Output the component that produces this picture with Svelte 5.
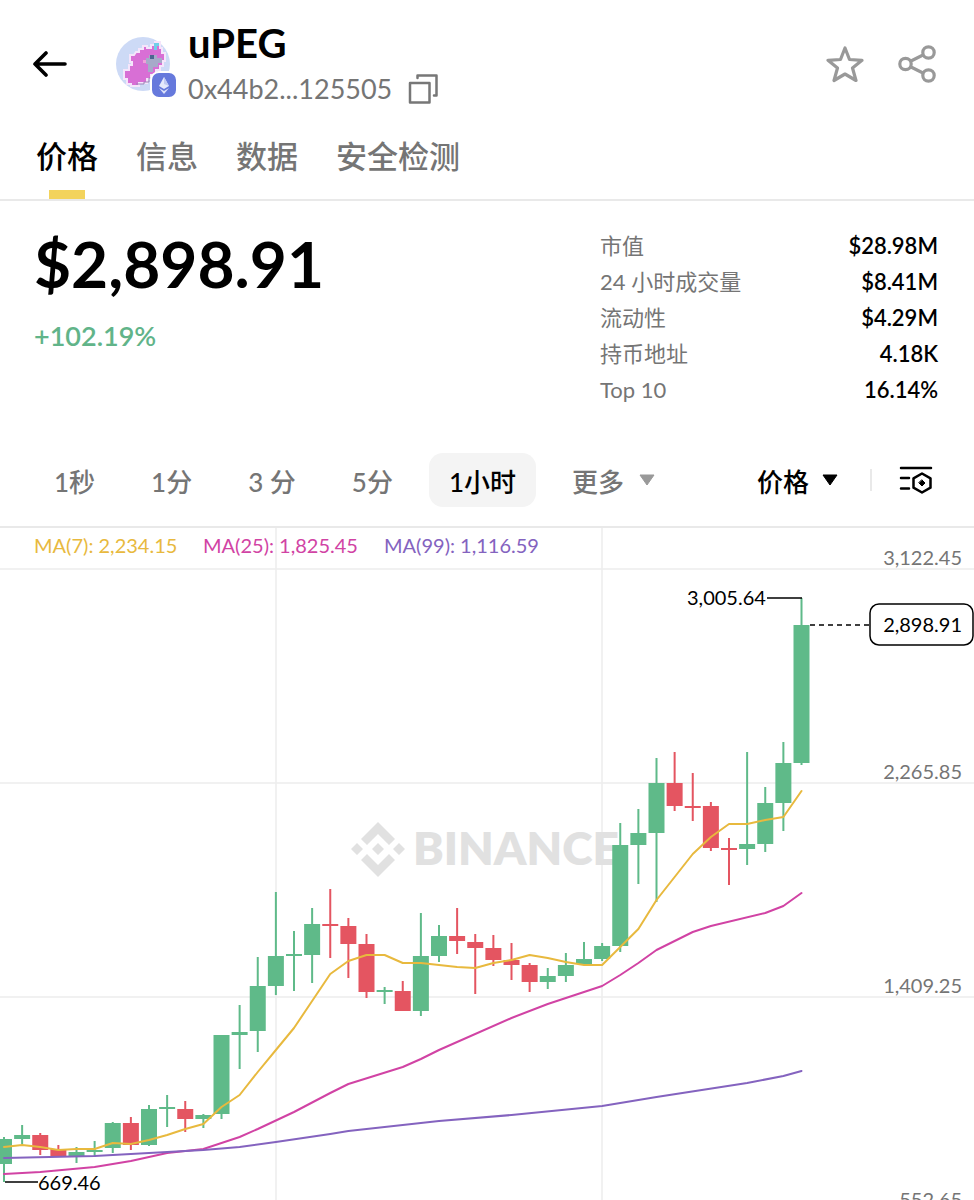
<script>
  let activeTab = $state('价格');
  let activeInterval = $state('1小时');
  let starred = $state(false);

  const tabs = ['价格', '信息', '数据', '安全检测'];
  const intervals = ['1秒', '1分', '3 分', '5分', '1小时'];

  const stats = [
    { label: '市值', value: '$28.98M' },
    { label: '24 小时成交量', value: '$8.41M' },
    { label: '流动性', value: '$4.29M' },
    { label: '持币地址', value: '4.18K' },
    { label: 'Top 10', value: '16.14%' },
  ];

  // Chart space: x 0..974, y 528..1200
  const STEP = 18.125;
  const BODY = 16;
  const xAt = (i) => 4 + i * STEP;

  // [direction, body top, body bottom, high, low]
  const candles = [
    ['up', 1139, 1164, 1137, 1182], ['up', 1135, 1139, 1125, 1144],
    ['down', 1135, 1150, 1133, 1155], ['down', 1149, 1157, 1145, 1157],
    ['up', 1152, 1156, 1147, 1163], ['up', 1150, 1152, 1141, 1157],
    ['up', 1123, 1148, 1122, 1153], ['down', 1123, 1145, 1117, 1150],
    ['up', 1109, 1145, 1105, 1146], ['up', 1107, 1109, 1095, 1127],
    ['down', 1109, 1119, 1101, 1132], ['up', 1115, 1119, 1114, 1128],
    ['up', 1035, 1114, 1035, 1119], ['up', 1032, 1035, 1005, 1069],
    ['up', 986, 1031, 957, 1052], ['up', 956, 986, 892, 995],
    ['up', 954, 956, 931, 991], ['up', 924, 955, 908, 983],
    ['down', 924, 926, 889, 958], ['down', 926, 944, 918, 978],
    ['down', 944, 992, 934, 998], ['up', 990, 992, 987, 1004],
    ['down', 991, 1011, 981, 1011], ['up', 956, 1011, 913, 1016],
    ['up', 936, 956, 925, 962], ['down', 936, 941, 908, 954],
    ['down', 942, 948, 934, 994], ['down', 948, 960, 935, 966],
    ['down', 960, 965, 943, 980], ['down', 965, 982, 963, 992],
    ['up', 976, 982, 968, 989], ['up', 965, 976, 953, 982],
    ['up', 959, 964, 942, 964], ['up', 946, 959, 943, 961],
    ['up', 845, 946, 823, 952], ['up', 833, 845, 809, 884],
    ['up', 783, 833, 758, 902], ['down', 783, 806, 752, 811],
    ['down', 806, 808, 773, 821], ['down', 806, 848, 802, 851],
    ['down', 848, 850, 838, 885], ['up', 844, 849, 752, 865],
    ['up', 803, 844, 787, 852], ['up', 763, 803, 742, 831],
    ['up', 625, 763, 598, 765],
  ];

  // [candle index, y]
  const ma7 = [
    1147, 1145, 1147, 1150, 1149, 1149, 1143, 1144, 1140, 1135, 1129, 1124, 1107, 1095, 1072,
    1050, 1028, 1001, 974, 961, 955, 955, 963, 963, 965, 967, 968, 963, 960, 955,
    958, 962, 965, 965, 947, 929, 900, 877, 854, 837, 824, 824, 820, 817, 791,
  ].map((y, i) => [i, y]);
  const ma25 = [
    [0, 1174], [2, 1172], [5, 1167], [7, 1161], [9, 1153], [10, 1151], [11, 1149], [13, 1137],
    [14, 1129], [16, 1112], [18, 1093], [19, 1084], [22, 1067], [23, 1059], [24, 1050], [28, 1018],
    [30, 1004], [33, 986], [34, 975], [35, 963], [36, 950], [38, 932], [39, 926], [42, 913],
    [43, 906], [44, 893],
  ];
  const ma99 = [
    [0, 1158], [5, 1156], [9, 1152], [11, 1150], [13, 1147], [15, 1142], [18, 1134], [19, 1131],
    [24, 1121], [28, 1115], [33, 1106], [36, 1097], [41, 1083], [43, 1076], [44, 1071],
  ];

  const averages = [
    { label: 'MA(7): 2,234.15', x: 34, color: '#e8b93e', points: ma7 },
    { label: 'MA(25): 1,825.45', x: 203, color: '#d143a4', points: ma25 },
    { label: 'MA(99): 1,116.59', x: 384, color: '#8463bf', points: ma99 },
  ];

  const gridRows = [
    { y: 569, label: '3,122.45' },
    { y: 783, label: '2,265.85' },
    { y: 997, label: '1,409.25' },
    { y: 1211, label: '552.65' },
  ];

  const toPoints = (points) => points.map(([i, y]) => `${xAt(i)},${y}`).join(' ');
</script>

<div class="page">
  <header>
    <button class="icon" aria-label="返回">
      <svg width="34" height="28" viewBox="0 0 34 28" fill="none" stroke="#000" stroke-width="3.600" stroke-linecap="round" stroke-linejoin="round">
        <path d="M32 14H2M13 3 2 14l11 11" />
      </svg>
    </button>

    <div class="avatar">
      <svg width="54" height="54" viewBox="0 0 54 54">
        <circle cx="27" cy="27" r="27" fill="#cddaf6" />
        <path d="M20 15h3v-3h4V9h4v2h4V8h4V5h5v6h2v5h3v8h-2v5h-3v4h-4v5h-5v4h-4v4h-8v3h-8v-2h-4v-5h-3v-9h5v-5h3v-3h-2v-7h4z" fill="#d86fd5" stroke="#f5e5fb" stroke-width="2" />
        <path d="M33 18h8v3h5v5h-4v4h-5v5h-5v-8h-2v-6h3z" fill="#a6aac9" />
        <path d="M38 6h5v3h-2v4h-3z" fill="#70cfe8" />
        <path d="M34 18h4v4h-4z" fill="#4d6590" />
        <path d="M27 23h3v3h-3z" fill="#efa0d9" />
        <path d="M20 47h8v-2h5v-4h4" fill="none" stroke="#9b85b7" />
      </svg>
      <svg class="chain" width="28" height="28" viewBox="0 0 28 28">
        <rect x="1" y="1" width="26" height="26" rx="8" fill="#6679dc" stroke="#fff" stroke-width="2" />
        <path d="m14 6 5 9-5 3-5-3z" fill="#e5e9fc" />
        <path d="m14 6 5 9-5-2z" fill="#c0caf3" />
        <path d="m9 17 5 3 5-3-5 6z" fill="#dce1fa" />
      </svg>
    </div>

    <div class="token">
      <h1>uPEG</h1>
      <div class="address">
        <span>0x44b2...125505</span>
        <button class="icon" aria-label="复制地址">
          <svg width="30" height="30" viewBox="0 0 30 30" fill="none" stroke="#777" stroke-width="2.500" stroke-linecap="round" stroke-linejoin="round">
            <path d="M2 9h19.500v19.500H2zM9.500 4V1.500h19v20H26" />
          </svg>
        </button>
      </div>
    </div>

    <div class="actions">
      <button class="icon" aria-label="收藏" aria-pressed={starred} onclick={() => starred = !starred}>
        <svg width="38" height="38" viewBox="0 0 38 38" fill={starred ? '#f3d35c' : 'none'} stroke="#999" stroke-width="3.200" stroke-linejoin="round">
          <path d="m19 3 4.500 11.500 12.500.800-9.500 7.700 3.500 12.500-11-6.500-11 6.500 3.500-12.500L2 15.300l12.500-.800z" />
        </svg>
      </button>
      <button class="icon" aria-label="分享">
        <svg width="38" height="38" viewBox="0 0 38 38" fill="none" stroke="#999" stroke-width="3.200">
          <circle cx="7.500" cy="19" r="5.700" />
          <circle cx="30.500" cy="7.500" r="5.700" />
          <circle cx="30.500" cy="30.500" r="5.700" />
          <path d="m12.500 16.300 13-6.500M12.500 21.700l13 6.500" />
        </svg>
      </button>
    </div>
  </header>

  <nav>
    {#each tabs as tab}
      <button class:active={activeTab === tab} onclick={() => activeTab = tab}>{tab}</button>
    {/each}
  </nav>

  <section class="summary">
    <div>
      <div class="price">$2,898.91</div>
      <div class="change">+102.19%</div>
    </div>
    <dl>
      {#each stats as stat}
        <div class="stat">
          <dt>{stat.label}</dt>
          <dd>{stat.value}</dd>
        </div>
      {/each}
    </dl>
  </section>

  <div class="toolbar">
    <div class="intervals">
      {#each intervals as interval}
        <button class:active={activeInterval === interval} onclick={() => activeInterval = interval}>{interval}</button>
      {/each}
      <button class="menu">
        更多
        <svg width="18" height="12" viewBox="0 0 18 12"><path d="M2 1h14L9 11z" fill="#999" stroke="#999" stroke-linejoin="round" /></svg>
      </button>
    </div>
    <div class="tools">
      <button class="menu dark">
        价格
        <svg width="18" height="12" viewBox="0 0 18 12"><path d="M2 1h14L9 11z" stroke="#000" stroke-linejoin="round" /></svg>
      </button>
      <span class="divider"></span>
      <button class="icon" aria-label="图表设置">
        <svg width="34" height="30" viewBox="0 0 34 30" fill="none" stroke="#000" stroke-width="2.500" stroke-linecap="round" stroke-linejoin="round">
          <path d="M2 3h30M2 13h8M2 23.500h8" />
          <path d="m23 8.500 8.500 4.800v9.400L23 27.500l-8.500-4.800v-9.400z" />
          <path d="m23 15 3 3-3 3-3-3z" fill="#000" stroke-width="1" />
        </svg>
      </button>
    </div>
  </div>

  <svg class="chart" viewBox="0 528 974 672" role="img" aria-label="uPEG 1小时 K线">
    <!-- Grid -->
    <g class="grid">
      {#each gridRows as row}
        <line x1="0" x2="974" y1={row.y} y2={row.y} />
      {/each}
      <line x1="276" x2="276" y1="527" y2="1200" />
      <line x1="602" x2="602" y1="527" y2="1200" />
    </g>

    <!-- Watermark -->
    <g fill="#e1e1e1">
      <path d="m378 822 17 17-6 6-11-11-11 11-6-6zM378 877l17-17-6-6-11 11-11-11-6 6zM378 843l6 6-6 6-6-6zM357 843l6 6-6 6-6-6zM399 843l6 6-6 6-6-6z" />
      <text class="watermark" x="413" y="865">BINANCE</text>
    </g>

    <!-- Candles -->
    {#each candles as [direction, top, bottom, high, low], i}
      <g class={direction}>
        <rect x={xAt(i) - 1} y={high} width="2" height={low - high} />
        <rect x={xAt(i) - BODY / 2} y={top} width={BODY} height={bottom - top} />
      </g>
    {/each}

    <!-- Moving averages -->
    {#each averages as avg}
      <polyline points={toPoints(avg.points)} stroke={avg.color} />
      <text x={avg.x} y="553" fill={avg.color}>{avg.label}</text>
    {/each}

    <!-- Axis labels -->
    {#each gridRows as row}
      <text class="axis" x="962" y={row.y - 4}>{row.label}</text>
    {/each}

    <!-- High, low and last price -->
    <path class="marker" d="M767 598H802M5 1182H38" />
    <text x="687" y="605">3,005.64</text>
    <text x="38" y="1190">669.46</text>
    <path class="marker" d="M810 625H870" stroke-dasharray="5 4" />
    <rect class="last" x="870" y="604" width="103" height="41" rx="9" />
    <text class="last-price" x="962" y="632">2,898.91</text>
  </svg>
</div>

<style>
  :global(body) {
    margin: 0;
    background: #fff;
  }
  .page {
    font-family: Lato, "Noto Sans CJK SC", sans-serif;
    color: #000;
  }
  button {
    padding: 0;
    border: none;
    background: none;
    color: #757575;
    font: inherit;
    cursor: pointer;
  }
  .icon, .icon svg {
    display: block;
  }
  header {
    display: flex;
    align-items: center;
    padding: 18px 38px 0 33px;
  }
  .avatar {
    position: relative;
    margin: 0 18px 0 49px;
  }
  .avatar svg {
    display: block;
  }
  .avatar .chain {
    position: absolute;
    right: -8px;
    bottom: -8px;
  }
  h1 {
    margin: 0;
    font-size: 40px;
    line-height: 50px;
    font-weight: 700;
  }
  .address {
    display: flex;
    align-items: center;
    gap: 16px;
    color: #757575;
    font-size: 27px;
    line-height: 42px;
  }
  .actions {
    display: flex;
    gap: 34px;
    margin-left: auto;
  }
  nav {
    display: flex;
    gap: 38px;
    padding: 14px 36px 0;
    border-bottom: 2px solid #e9e9e9;
  }
  nav button {
    position: relative;
    height: 75px;
    padding-bottom: 14px;
    font-size: 31px;
    font-weight: 500;
  }
  nav .active {
    color: #000;
  }
  nav .active::after {
    content: '';
    position: absolute;
    left: 50%;
    bottom: 0;
    width: 36px;
    height: 9px;
    margin-left: -18px;
    background: #f3d35c;
  }
  .summary {
    display: flex;
    justify-content: space-between;
    padding: 27px 36px 45px 34px;
  }
  .price {
    font-size: 64px;
    line-height: 72px;
    font-weight: 700;
  }
  .change {
    margin-top: 16px;
    color: #61b489;
    font-size: 27px;
    line-height: 40px;
    font-weight: 600;
  }
  dl {
    width: 338px;
    margin: 0;
    font-size: 22px;
    line-height: 36px;
  }
  .stat {
    display: flex;
    justify-content: space-between;
  }
  dt {
    color: #757575;
  }
  dd {
    margin: 0;
    font-weight: 600;
  }
  .toolbar {
    display: flex;
    justify-content: space-between;
    padding: 0 41px 19px 34px;
    border-bottom: 2px solid #e9e9e9;
    font-size: 26px;
    font-weight: 500;
  }
  .intervals, .tools {
    display: flex;
    align-items: center;
  }
  .intervals {
    gap: 16px;
  }
  .intervals button {
    height: 54px;
    padding: 0 20px;
    border-radius: 14px;
  }
  .intervals .active {
    background: #f4f4f4;
    color: #000;
  }
  .menu {
    display: flex;
    align-items: center;
    gap: 14px;
  }
  .dark {
    gap: 12px;
    color: #000;
  }
  .divider {
    width: 2px;
    height: 22px;
    margin: 0 27px 0 31px;
    background: #e9e9e9;
  }
  .chart {
    display: block;
    width: 100%;
    font-size: 20px;
  }
  .grid {
    stroke: #ececec;
    stroke-width: 1.5;
  }
  .watermark {
    font-family: Lato, sans-serif;
    font-size: 46px;
    font-weight: 800;
  }
  .up {
    fill: #5fba89;
  }
  .down {
    fill: #e45561;
  }
  polyline {
    fill: none;
    stroke-width: 2;
    stroke-linejoin: round;
    stroke-linecap: round;
  }
  .axis {
    fill: #757575;
    text-anchor: end;
  }
  .marker {
    stroke: #000;
    stroke-width: 1.5;
  }
  .last {
    fill: #fff;
    stroke: #000;
    stroke-width: 1.5;
  }
  .last-price {
    text-anchor: end;
  }
</style>
